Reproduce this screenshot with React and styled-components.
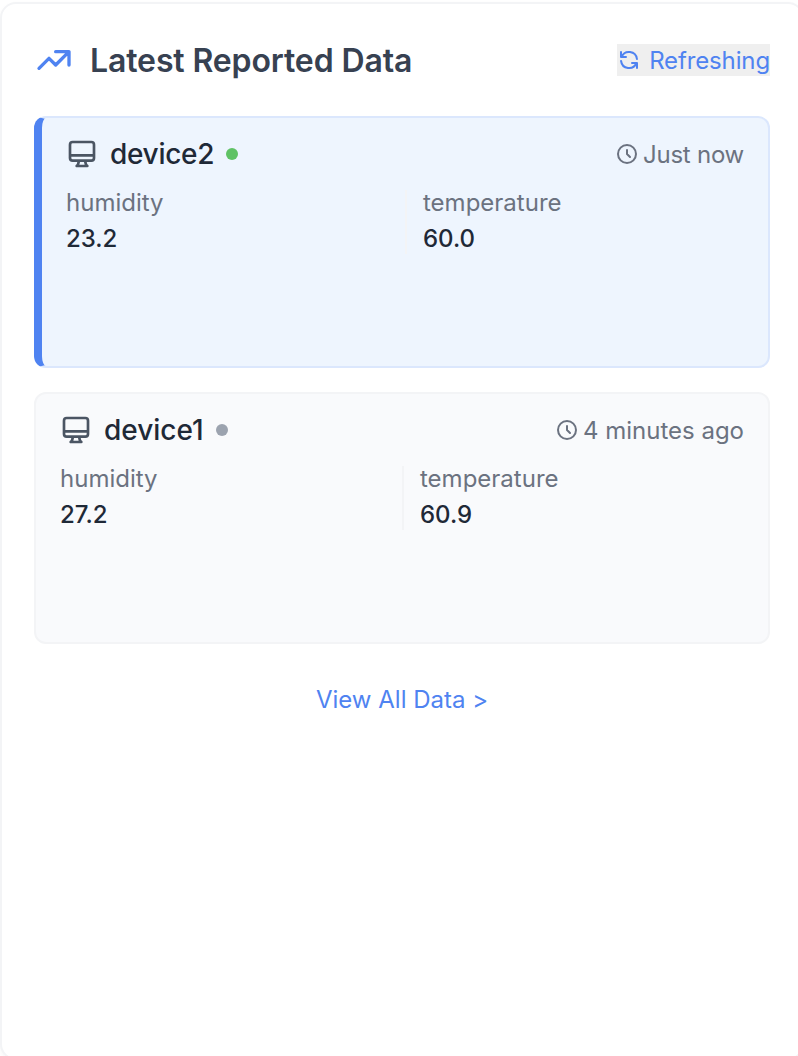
import React from 'react';
import styled, { createGlobalStyle } from 'styled-components';

const GlobalStyle = createGlobalStyle`
  *, *::before, *::after { box-sizing: border-box; }
  body {
    margin: 0;
    background: #fff;
    font-family: Inter, 'Liberation Sans', sans-serif;
    overflow: hidden;
  }
  h2, h3, p, dl, dt, dd { margin: 0; }
`;

const Panel = styled.section`
  width: 804px;
  height: 1058px;
  margin-top: 2px;
  padding: 32px;
  border: 2px solid #f3f4f6;
  border-radius: 16px;
  background: #fff;
  box-shadow: 0 2px 4px rgba(0, 0, 0, 0.04);
`;

const Content = styled.div`
  width: 736px;
`;

const Header = styled.header`
  display: flex;
  align-items: center;
  justify-content: space-between;
  height: 48px;
  margin-bottom: 32px;
`;

const Title = styled.h2`
  display: flex;
  align-items: center;
  gap: 16px;
  color: #374151;
  font-size: 32px;
  font-weight: 600;
  line-height: 48px;
  letter-spacing: -0.12px;
  white-space: nowrap;
`;

const Lowered = styled.span`
  padding-top: 2px;
`;

const StrokeIcon = styled.svg`
  flex: none;
  width: ${(p) => p.$size}px;
  height: ${(p) => p.$size}px;
  fill: none;
  stroke: ${(p) => p.$color || 'currentColor'};
  stroke-width: 2;
  stroke-linecap: round;
  stroke-linejoin: round;
`;

const RefreshButton = styled.button`
  display: flex;
  align-items: center;
  gap: 8px;
  height: 32px;
  padding: 0;
  border: 0;
  background: #efefef;
  color: #4f83f1;
  font: 400 24px/32px Inter, 'Liberation Sans', sans-serif;
  letter-spacing: -0.13px;
`;

const DeviceList = styled.div`
  display: flex;
  flex-direction: column;
  gap: 24px;
`;

const DeviceCard = styled.article`
  height: 252px;
  padding: 16px 24px;
  border: 2px solid ${(p) => (p.$active ? '#dbe7fd' : '#f3f4f6')};
  ${(p) => p.$active && 'border-left: 8px solid #4f83f1;'}
  border-radius: 12px;
  background: ${(p) => (p.$active ? '#eef5fe' : '#f9fafc')};
`;

const DeviceHeader = styled.div`
  display: flex;
  align-items: center;
  justify-content: space-between;
  height: 40px;
  margin-bottom: 16px;
`;

const DeviceName = styled.h3`
  display: flex;
  align-items: center;
  gap: 12px;
  color: #1f2937;
  font-size: 28px;
  font-weight: 500;
  line-height: 40px;
  letter-spacing: ${(p) => (p.$tight ? '-0.3px' : 'normal')};
`;

const StatusDot = styled.span`
  width: 12px;
  height: 12px;
  border-radius: 50%;
  background: ${(p) => (p.$online ? '#5fc265' : '#9ca3af')};
`;

const Timestamp = styled.div`
  display: flex;
  align-items: center;
  gap: 4px;
  color: #6b7280;
  font-size: 24px;
  line-height: 32px;
  letter-spacing: ${(p) => (p.$tight ? '-0.25px' : 'normal')};
`;

const Readings = styled.dl`
  display: grid;
  grid-template-columns: 1fr 1fr;
`;

const Reading = styled.div`
  height: 64px;
  & + & {
    padding-left: 16px;
    border-left: 2px solid ${(p) => (p.$active ? '#edf0f9' : '#f3f4f6')};
  }
`;

const Label = styled.dt`
  padding-top: 1px;
  color: #6b7280;
  font-size: 24px;
  line-height: 24px;
`;

const Value = styled.dd`
  margin-top: 8px;
  color: #1f2937;
  font-size: 24px;
  font-weight: 500;
  line-height: 32px;
`;

const ViewAll = styled.a`
  display: block;
  margin-top: 40px;
  color: #4f83f1;
  font-size: 24px;
  line-height: 32px;
  text-align: center;
`;

const devices = [
  { name: 'device2', active: true, time: 'Just now', readings: [['humidity', '23.2'], ['temperature', '60.0']] },
  { name: 'device1', active: false, time: '4 minutes ago', readings: [['humidity', '27.2'], ['temperature', '60.9']] },
];

function Device({ device }) {
  return (
    <DeviceCard $active={device.active}>
      <DeviceHeader>
        <DeviceName $tight={device.active}>
          <StrokeIcon $size={32} $color="#4b5563" viewBox="0 0 24 24">
            <path d="M9.75 17L9 20l-1 1h8l-1-1-.75-3M3 13h18M5 17h14a2 2 0 002-2V5a2 2 0 00-2-2H5a2 2 0 00-2 2v10a2 2 0 002 2z" />
          </StrokeIcon>
          {device.name}
          <StatusDot $online={device.active} />
        </DeviceName>
        <Timestamp $tight={device.active}>
          <StrokeIcon $size={24} viewBox="0 0 24 24">
            <path d="M12 8v4l3 3m6-3a9 9 0 11-18 0 9 9 0 0118 0z" />
          </StrokeIcon>
          <Lowered>{device.time}</Lowered>
        </Timestamp>
      </DeviceHeader>
      <Readings>
        {device.readings.map(([label, value]) => (
          <Reading key={label} $active={device.active}>
            <Label>{label}</Label>
            <Value>{value}</Value>
          </Reading>
        ))}
      </Readings>
    </DeviceCard>
  );
}

export default function App() {
  return (
    <>
      <GlobalStyle />
      <Panel>
        <Content>
          <Header>
            <Title>
              <StrokeIcon $size={40} $color="#4f83f1" viewBox="0 0 24 24">
                <path d="M13 7h8m0 0v8m0-8l-8 8-4-4-6 6" />
              </StrokeIcon>
              <Lowered>Latest Reported Data</Lowered>
            </Title>
            <RefreshButton>
              <StrokeIcon $size={24} viewBox="0 0 24 24">
                <path d="M4 4v5h.582m15.356 2A8.001 8.001 0 004.582 9m0 0H9m11 11v-5h-.581m0 0a8.003 8.003 0 01-15.357-2m15.357 2H15" />
              </StrokeIcon>
              <Lowered>Refreshing</Lowered>
            </RefreshButton>
          </Header>
          <DeviceList>
            {devices.map((d) => <Device key={d.name} device={d} />)}
          </DeviceList>
          <ViewAll>View All Data &gt;</ViewAll>
        </Content>
      </Panel>
    </>
  );
}
